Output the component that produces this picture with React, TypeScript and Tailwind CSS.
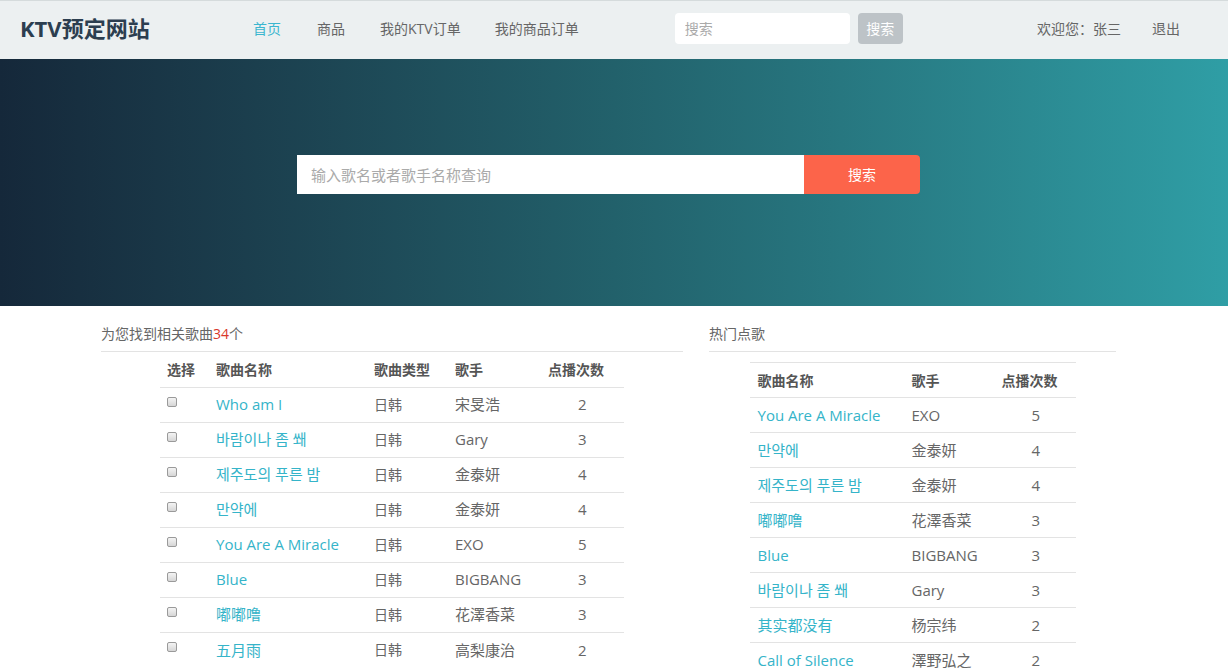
import React from 'react';

const font = { fontFamily: '"Open Sans", "Noto Sans CJK SC", sans-serif' };

const results = [
  { name: 'Who am I', type: '日韩', singer: '宋旻浩', count: 2 },
  { name: '바람이나 좀 쐐', type: '日韩', singer: 'Gary', count: 3 },
  { name: '제주도의 푸른 밤', type: '日韩', singer: '金泰妍', count: 4 },
  { name: '만약에', type: '日韩', singer: '金泰妍', count: 4 },
  { name: 'You Are A Miracle', type: '日韩', singer: 'EXO', count: 5 },
  { name: 'Blue', type: '日韩', singer: 'BIGBANG', count: 3 },
  { name: '嘟嘟噜', type: '日韩', singer: '花澤香菜', count: 3 },
  { name: '五月雨', type: '日韩', singer: '高梨康治', count: 2 },
];

const hot = [
  { name: 'You Are A Miracle', singer: 'EXO', count: 5 },
  { name: '만약에', singer: '金泰妍', count: 4 },
  { name: '제주도의 푸른 밤', singer: '金泰妍', count: 4 },
  { name: '嘟嘟噜', singer: '花澤香菜', count: 3 },
  { name: 'Blue', singer: 'BIGBANG', count: 3 },
  { name: '바람이나 좀 쐐', singer: 'Gary', count: 3 },
  { name: '其实都没有', singer: '杨宗纬', count: 2 },
  { name: 'Call of Silence', singer: '澤野弘之', count: 2 },
];

const Header: React.FC = () => (
  <header className="h-[59px] bg-[#ecf0f1] border-t border-[#d5dbdc] flex items-center pb-[3px]">
    <div className="w-[253px] pl-[20px] text-[22px] font-bold text-[#2c3e50]">KTV预定网站</div>
    <nav className="flex items-center text-[14px] text-[#666]">
      <a className="text-[#3bb6cf] mr-[36px]">首页</a>
      <a className="mr-[35px]">商品</a>
      <a className="mr-[34px]">我的KTV订单</a>
      <a>我的商品订单</a>
    </nav>
    <div className="ml-[96px] flex items-center">
      <input
        placeholder="搜索"
        className="w-[175px] h-[31px] rounded bg-white px-[10px] text-[14px] placeholder:text-[#aaa] outline-none"
      />
      <button className="ml-[8px] w-[45px] h-[31px] rounded bg-[#bdc3c7] text-white text-[14px]">搜索</button>
    </div>
    <div className="ml-auto flex items-center text-[14px] text-[#666] pr-[48px]">
      <span>欢迎您：张三</span>
      <a className="ml-[31px]">退出</a>
    </div>
  </header>
);

const Hero: React.FC = () => (
  <section className="h-[247px] bg-gradient-to-r from-[#15283a] via-[#22616b] to-[#2f9ea5] flex items-center justify-center">
    <div className="flex -mt-[16px] mr-[11px]">
      <input
        placeholder="输入歌名或者歌手名称查询"
        className="w-[507px] h-[39px] bg-white px-[14px] text-[15px] placeholder:text-[#aaa] outline-none"
      />
      <button className="w-[116px] h-[39px] bg-[#fc644a] text-white text-[14px] rounded-r">搜索</button>
    </div>
  </section>
);

const Checkbox: React.FC = () => (
  <span className="inline-block w-[10px] h-[10px] border border-[#9a9a9a] rounded-[2px] bg-gradient-to-b from-[#f4f4f4] to-[#d6d6d6] -translate-y-[3px]" />
);

const ResultTable: React.FC = () => (
  <table className="w-[464px] mx-auto border-collapse text-[14px] text-[#666]">
    <thead>
      <tr className="h-[35px] text-[#555] text-left">
        <th className="pl-[7px] w-[56px] font-bold">选择</th>
        <th className="w-[158px] font-bold">歌曲名称</th>
        <th className="w-[81px] font-bold">歌曲类型</th>
        <th className="w-[93px] font-bold">歌手</th>
        <th className="font-bold">点播次数</th>
      </tr>
    </thead>
    <tbody>
      {results.map((r) => (
        <tr key={r.name} className="h-[35px] border-t border-[#e3e3e3]">
          <td className="pl-[7px]"><Checkbox /></td>
          <td className="text-[#35b4c9] text-[15px]">{r.name}</td>
          <td>{r.type}</td>
          <td className="text-[15px]">{r.singer}</td>
          <td className="text-[15px] pl-[30px]">{r.count}</td>
        </tr>
      ))}
    </tbody>
  </table>
);

const HotTable: React.FC = () => (
  <table className="w-[326px] mx-auto border-collapse text-[14px] text-[#666] border-t border-[#e3e3e3]">
    <thead>
      <tr className="h-[35px] text-[#555] text-left">
        <th className="pl-[8px] w-[162px] font-bold">歌曲名称</th>
        <th className="w-[90px] font-bold">歌手</th>
        <th className="font-bold">点播次数</th>
      </tr>
    </thead>
    <tbody>
      {hot.map((r) => (
        <tr key={r.name} className="h-[35px] border-t border-[#e3e3e3]">
          <td className="pl-[8px] text-[#35b4c9] text-[15px]">{r.name}</td>
          <td className="text-[15px]">{r.singer}</td>
          <td className="text-[15px] pl-[30px]">{r.count}</td>
        </tr>
      ))}
    </tbody>
  </table>
);

export default function App() {
  return (
    <div className="w-[1228px] h-[672px] overflow-hidden bg-white" style={font}>
      <Header />
      <Hero />
      <main className="flex pl-[101px] pt-[15px]">
        <div className="w-[582px]">
          <div className="h-[31px] flex items-center text-[14px] text-[#666] border-b border-[#e3e3e3] pb-[6px]">
            为您找到相关歌曲<span className="text-[#d9372a]">34</span>个
          </div>
          <ResultTable />
        </div>
        <div className="ml-[26px] w-[407px]">
          <div className="h-[31px] flex items-center text-[14px] text-[#666] border-b border-[#e3e3e3] pb-[6px]">
            热门点歌
          </div>
          <div className="mt-[10px]">
            <HotTable />
          </div>
        </div>
      </main>
    </div>
  );
}
